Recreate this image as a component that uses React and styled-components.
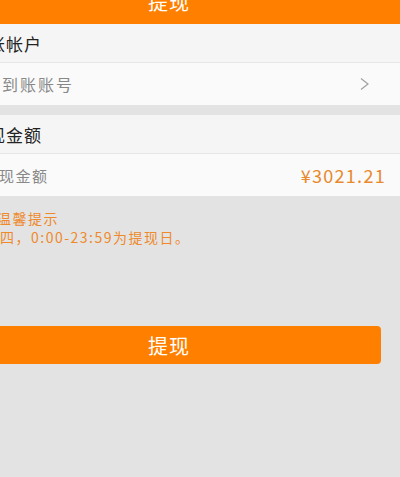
import React from 'react';
import styled, { createGlobalStyle } from 'styled-components';

const GlobalStyle = createGlobalStyle`
  html, body {
    margin: 0;
    padding: 0;
    height: 100%;
    overflow: hidden;
    background: #e3e3e3;
    font-family: "Noto Sans CJK SC", "Noto Sans", sans-serif;
  }
`;

const Page = styled.div`
  width: 462px;
  margin-left: -62px;
  margin-top: -21px;
  min-height: 520px;
  background: #e3e3e3;
`;

const Header = styled.div`
  height: 45px;
  background: #ff7f00;
  color: #fff;
  font-size: 20px;
  display: flex;
  align-items: center;
  justify-content: center;
  letter-spacing: 1px;
`;

const Section = styled.div`
  margin-bottom: ${(p) => p.gap || 0}px;
`;

const SectionTitle = styled.div`
  height: 38px;
  display: flex;
  align-items: center;
  padding: 0 32px;
  background: #f5f5f5;
  border-bottom: 1px solid #e6e6e6;
  font-size: 17px;
  letter-spacing: 1px;
  color: #222;
`;

const Row = styled.div`
  height: 42px;
  display: flex;
  align-items: center;
  justify-content: space-between;
  padding: 0 ${(p) => p.right || 14}px 0 28px;
  background: #fafafa;
  font-size: ${(p) => p.size || 16}px;
  letter-spacing: ${(p) => p.spacing || 2}px;
  color: #888;
`;

const Amount = styled.span`
  color: #e8892b;
  font-size: 18px;
  letter-spacing: 1.3px;
`;

const Tips = styled.div`
  padding: 13px 31px 0;
  color: #ee8a2c;
  font-size: 14px;
  line-height: 19px;
  letter-spacing: 1.5px;
`;

const TipsTitle = styled.div`
  padding-left: 28px;
`;

const SubmitButton = styled.button`
  display: block;
  width: calc(100% - 38px);
  margin: 79px auto 0;
  height: 38px;
  border: none;
  border-radius: 4px;
  background: #ff7f00;
  color: #fff;
  font-family: inherit;
  font-size: 20px;
  letter-spacing: 1px;
  cursor: pointer;
`;

const Chevron = () => (
  <svg width="9" height="14" viewBox="0 0 9 14">
    <polyline points="1,1.5 8,7 1,12.5" fill="none" stroke="#a0a0a0" strokeWidth="1.2" />
  </svg>
);

export default function App() {
  return (
    <>
      <GlobalStyle />
      <Page>
        <Header>提现</Header>
        <Section gap={10}>
          <SectionTitle>到账帐户</SectionTitle>
          <Row right={31}>
            <span>选择到账账号</span>
            <Chevron />
          </Row>
        </Section>
        <Section>
          <SectionTitle>提现金额</SectionTitle>
          <Row size={15} spacing={1.5}>
            <span>可提现金额</span>
            <Amount>¥3021.21</Amount>
          </Row>
        </Section>
        <Tips>
          <TipsTitle>温馨提示</TipsTitle>
          <div>每周四，0:00-23:59为提现日。</div>
        </Tips>
        <SubmitButton>提现</SubmitButton>
      </Page>
    </>
  );
}
